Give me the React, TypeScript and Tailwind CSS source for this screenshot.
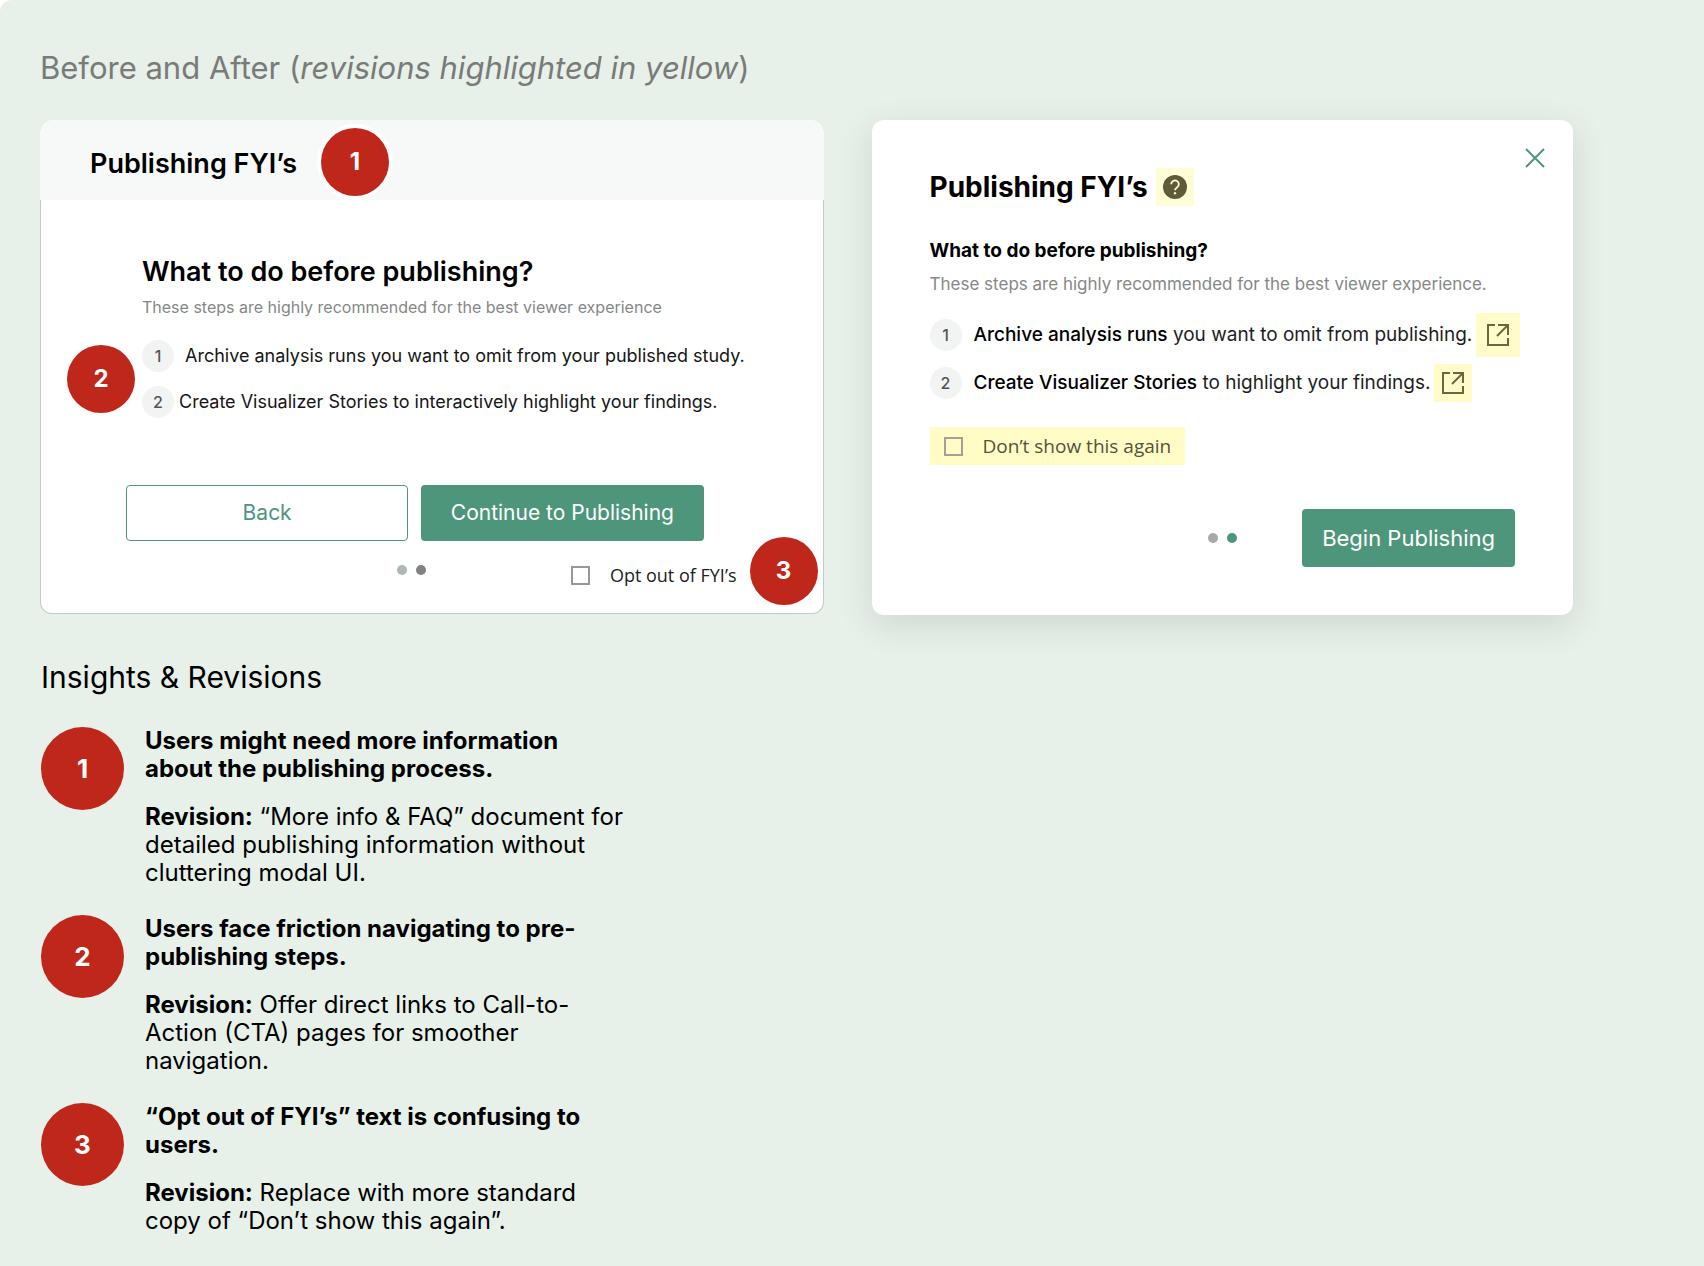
import { useState, type ReactNode } from "react"

const insights = [
    {
        title: "Users might need more information about the publishing process.",
        revision: "“More info & FAQ” document for detailed publishing information without cluttering modal UI.",
    },
    {
        title: "Users face friction navigating to pre-publishing steps.",
        revision: "Offer direct links to Call-to-Action (CTA) pages for smoother navigation.",
    },
    {
        title: "“Opt out of FYI’s” text is confusing to users.",
        revision: "Replace with more standard copy of “Don’t show this again”.",
    },
]

function Marker({ n, className = "" }: { n: number; className?: string }) {
    return (
        <span className={`flex size-[68px] shrink-0 items-center justify-center rounded-full bg-[#bf271b] text-2xl font-bold text-white ${className}`}>
            {n}
        </span>
    )
}

function StepNumber({ n }: { n: number }) {
    return (
        <span className="flex size-8 shrink-0 items-center justify-center rounded-full bg-[#f2f3f3] text-base font-medium text-[#555]">
            {n}
        </span>
    )
}

function Dots({ first, second }: { first: string; second: string }) {
    return (
        <div className="flex gap-[9px]">
            <span className={`size-[10px] rounded-full ${first}`} />
            <span className={`size-[10px] rounded-full ${second}`} />
        </div>
    )
}

function Checkbox({ children, className = "", boxClass }: { children: ReactNode; className?: string; boxClass: string }) {
    const [checked, setChecked] = useState(false)

    return (
        <label className={`flex items-center gap-5 font-['Open_Sans',sans-serif] ${className}`}>
            <input
                type="checkbox"
                checked={checked}
                onChange={() => setChecked(!checked)}
                className={`size-[19px] appearance-none border-2 checked:bg-[#4d967c] ${boxClass}`}
            />
            {children}
        </label>
    )
}

function ExternalLink({ label, className }: { label: string; className: string }) {
    return (
        <a href="#" aria-label={label} className={`flex shrink-0 items-center justify-center bg-[#fffcc9] text-[#69673f] ${className}`}>
            <svg width="24" height="24" viewBox="0 0 24 24" fill="none" stroke="currentColor" strokeWidth="2">
                <path d="M9 2H2v20h20v-7" />
                <path d="M12 2h10v10" />
                <path d="M22 2 11 13" />
            </svg>
        </a>
    )
}

function BeforeCard() {
    return (
        <section className="relative rounded-xl border border-[#c3cbc7] border-t-0 bg-white">
            <header className="-mx-px flex h-20 items-center gap-6 rounded-t-xl bg-[#f7f8f8] pt-1 pl-[50px]">
                <h2 className="pt-1 text-[27px] leading-9 font-semibold">Publishing FYI’s</h2>
                <Marker n={1} className="ring-4 ring-white" />
            </header>

            <div className="pt-[54px] pl-[101px]">
                <h3 className="text-[27px] leading-9 font-semibold">What to do before publishing?</h3>
                <p className="mt-[5px] text-base leading-6 text-[#858887]">
                    These steps are highly recommended for the best viewer experience
                </p>
                <ol className="relative mt-[21px] space-y-[14px] text-lg whitespace-nowrap text-[#161616]">
                    <li className="flex items-center gap-[11px]">
                        <StepNumber n={1} />
                        Archive analysis runs you want to omit from your published study.
                    </li>
                    <li className="flex items-center gap-[5px]">
                        <StepNumber n={2} />
                        Create Visualizer Stories to interactively highlight your findings.
                    </li>
                    <Marker n={2} className="absolute top-[5px] right-full mr-[7px]" />
                </ol>
            </div>

            <div className="mt-[67px] mr-[119px] ml-[85px] grid grid-cols-2 gap-[13px] text-[21px]">
                <button className="h-14 rounded border border-[#4d967c] text-[#4d967c]">Back</button>
                <button className="h-14 rounded bg-[#4d967c] text-white">Continue to Publishing</button>
            </div>

            <div className="mt-5 flex items-start justify-between pr-[86px] pb-6 pl-[356px]">
                <div className="pt-1">
                    <Dots first="bg-[#adb9b4]" second="bg-[#808381]" />
                </div>
                <Checkbox className="text-lg leading-7 text-[#222]" boxClass="border-[#939997]">
                    Opt out of FYI’s
                </Checkbox>
            </div>
            <Marker n={3} className="absolute right-[5px] bottom-2" />
        </section>
    )
}

function AfterCard() {
    return (
        <section className="relative rounded-xl bg-white px-[58px] pt-12 pb-12 shadow-[0_10px_34px_rgba(60,70,65,0.14)]">
            <button aria-label="Close" className="absolute top-7 right-7 text-[#4d967c]">
                <svg width="20" height="20" viewBox="0 0 20 20" fill="none" stroke="currentColor" strokeWidth="2">
                    <path d="M1 1 19 19M19 1 1 19" />
                </svg>
            </button>

            <div className="flex items-center gap-2">
                <h2 className="text-[28px] leading-9 font-bold">Publishing FYI’s</h2>
                <span className="flex size-[38px] items-center justify-center bg-[#fffdd6]">
                    <svg width="24" height="24" viewBox="0 0 24 24">
                        <circle cx="12" cy="12" r="12" fill="#5f5b3a" />
                        <path d="M8.2 9.2a3.8 3.8 0 1 1 5.8 3.2c-1.3.8-2 1.4-2 2.9" fill="none" stroke="#fffdd6" strokeWidth="1.8" />
                        <circle cx="12" cy="18.2" r="1.2" fill="#fffdd6" />
                    </svg>
                </span>
            </div>

            <h3 className="mt-[31px] text-[19px] leading-7 font-bold">What to do before publishing?</h3>
            <p className="mt-[7px] text-[17px] leading-6 text-[#858887]">
                These steps are highly recommended for the best viewer experience.
            </p>

            <ol className="mt-[17px] space-y-1 text-[19px] whitespace-nowrap text-[#1e1e1e]">
                <li className="flex h-11 items-center">
                    <StepNumber n={1} />
                    <span className="mr-1 ml-3"><b className="font-medium text-black">Archive analysis runs</b> you want to omit from publishing.</span>
                    <ExternalLink label="Open archive" className="size-11" />
                </li>
                <li className="flex h-11 items-center">
                    <StepNumber n={2} />
                    <span className="mr-1 ml-3"><b className="font-medium text-black">Create Visualizer Stories</b> to highlight your findings.</span>
                    <ExternalLink label="Open visualizer" className="size-[38px]" />
                </li>
            </ol>

            <Checkbox className="mt-[22px] h-[38px] w-fit bg-[#fffcc6] px-[14px] text-[19px] text-[#55533a]" boxClass="border-[#a59f95]">
                Don’t show this again
            </Checkbox>

            <div className="mt-11 flex items-center justify-end gap-[65px]">
                <Dots first="bg-[#a8a8a8]" second="bg-[#4d967c]" />
                <button className="h-[58px] rounded bg-[#4d967c] px-5 text-[22px] text-white">Begin Publishing</button>
            </div>
        </section>
    )
}

export default function App() {
    return (
        <div className="min-h-screen bg-white font-['Inter',sans-serif] text-black">
            <main className="min-h-screen rounded-tl-xl bg-[#e7f0e9] pt-12 pr-[131px] pb-6 pl-10">
                <h1 className="text-[31px] leading-10 text-[#797b78]">
                    Before and After (<em>revisions highlighted in yellow</em>)
                </h1>

                <div className="mt-8 grid grid-cols-[minmax(0,783fr)_minmax(0,701fr)] items-start gap-12">
                    <BeforeCard />
                    <AfterCard />
                </div>

                <div className="mt-[42px] pl-px">
                    <h2 className="text-[30px] leading-10">Insights & Revisions</h2>
                    <ol className="mt-[30px] space-y-7">
                        {insights.map((item, i) => (
                            <li key={i} className="flex items-start gap-[21px]">
                                <span className="flex size-[83px] shrink-0 items-center justify-center rounded-full bg-[#bf271b] text-[26px] font-bold text-white">
                                    {i + 1}
                                </span>
                                <div className="w-[480px] text-2xl leading-7">
                                    <p className="font-bold">{item.title}</p>
                                    <p className="mt-5"><b>Revision:</b> {item.revision}</p>
                                </div>
                            </li>
                        ))}
                    </ol>
                </div>
            </main>
        </div>
    )
}
